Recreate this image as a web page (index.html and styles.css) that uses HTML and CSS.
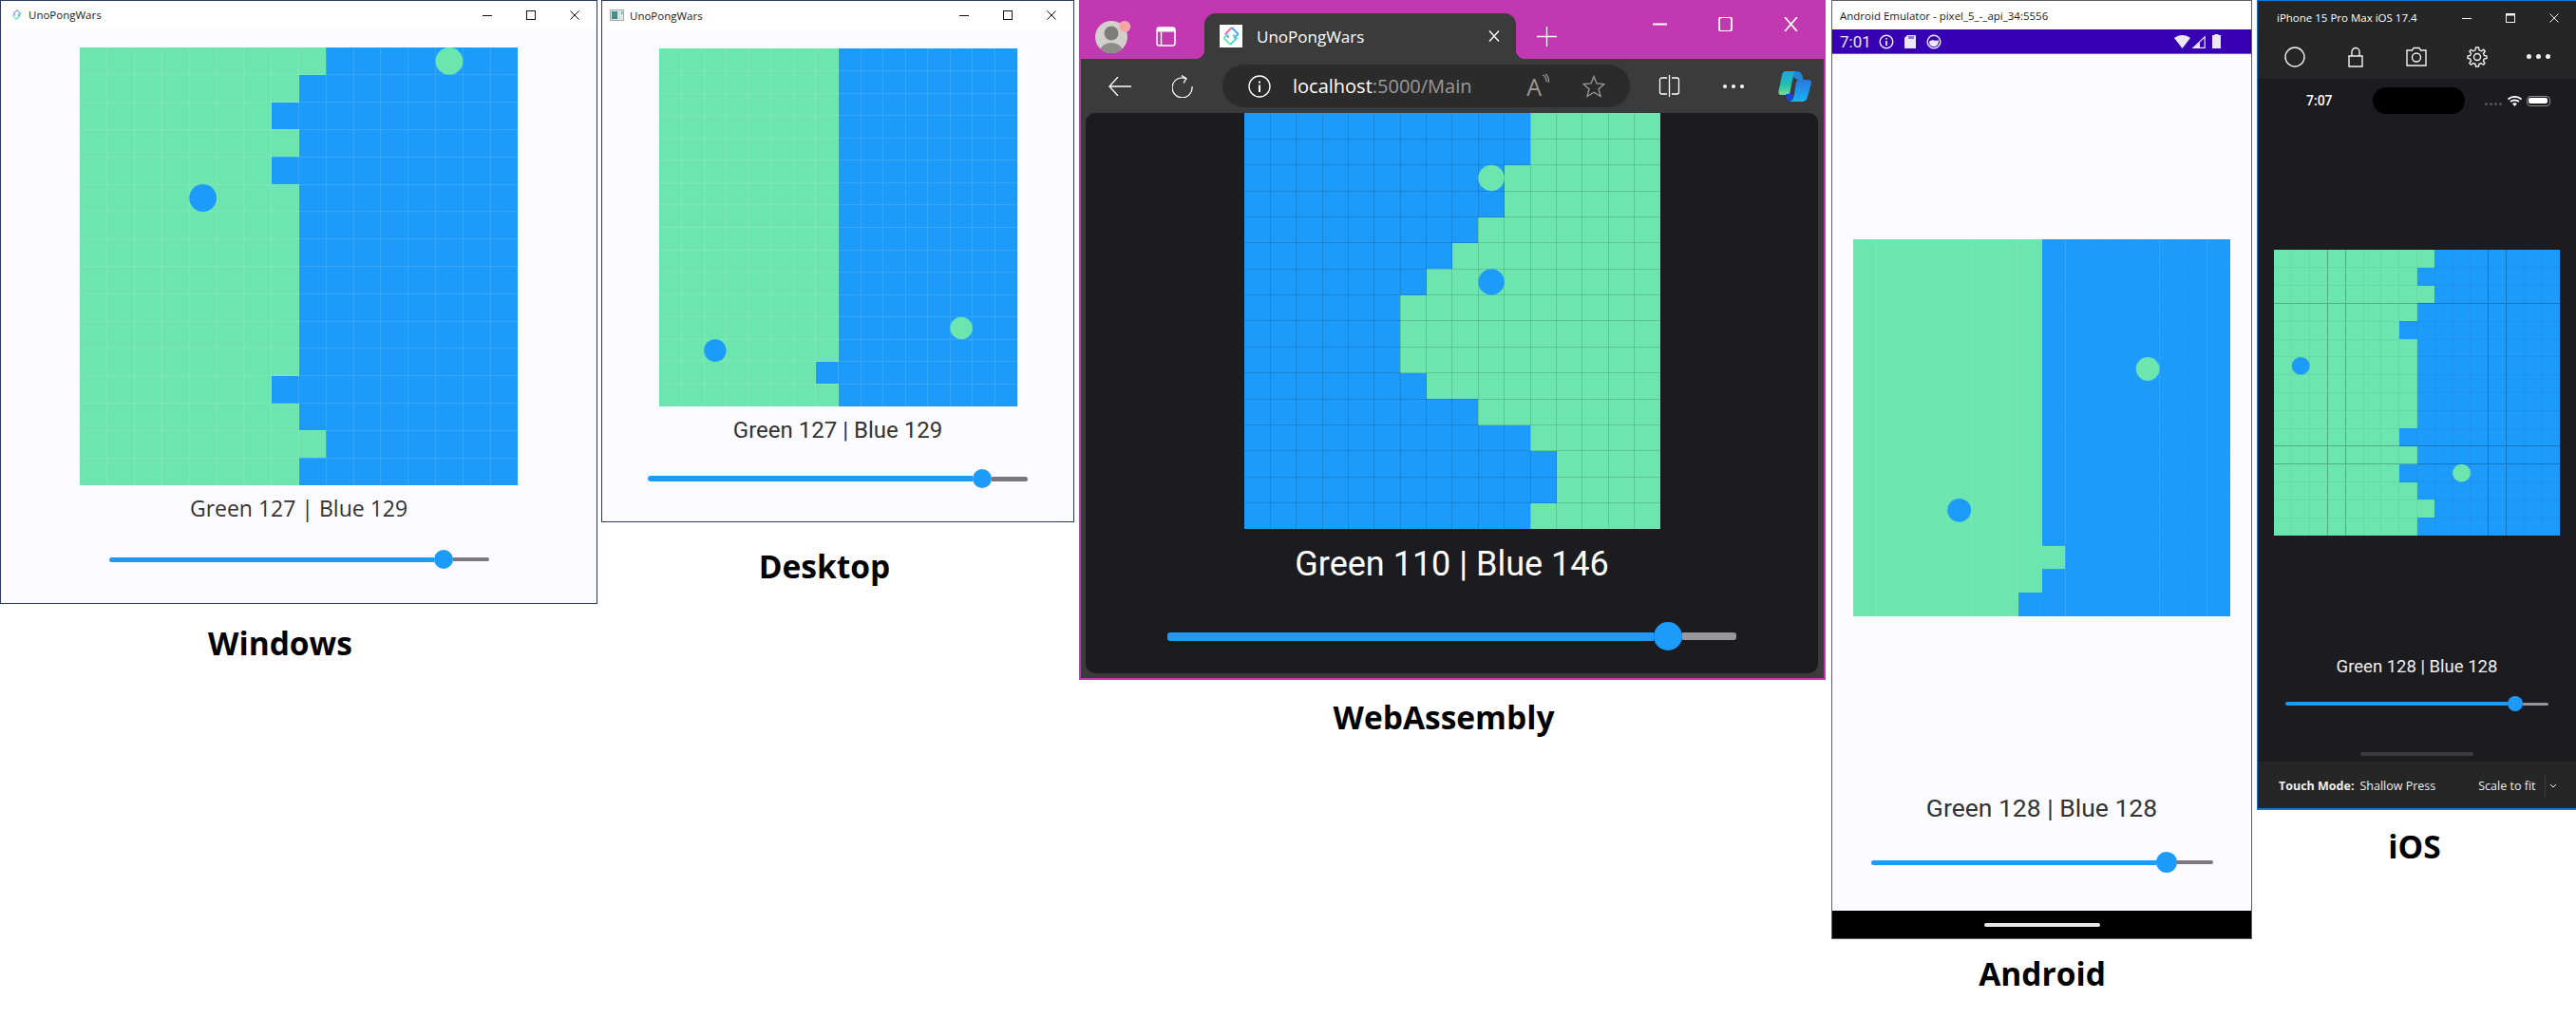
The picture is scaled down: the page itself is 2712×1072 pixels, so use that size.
FILE: index.html
```html
<!DOCTYPE html>
<html lang="en">
<head>
<meta charset="utf-8">
<title>UnoPongWars on five platforms</title>
<link rel="stylesheet" href="styles.css">
</head>
<body>
<svg class="defs" aria-hidden="true">
  <defs>
    <path id="grid" class="gridline" d="M1 0V16M2 0V16M3 0V16M4 0V16M5 0V16M6 0V16M7 0V16M8 0V16M9 0V16M10 0V16M11 0V16M12 0V16M13 0V16M14 0V16M15 0V16M0 1H16M0 2H16M0 3H16M0 4H16M0 5H16M0 6H16M0 7H16M0 8H16M0 9H16M0 10H16M0 11H16M0 12H16M0 13H16M0 14H16M0 15H16"/>
    <g id="ic-min"><path d="M0 5.500H10"/></g>
    <g id="ic-max"><rect x=".5" y=".5" width="9" height="9"/></g>
    <g id="ic-close"><path d="M.5 .5L9.500 9.500M9.500 .5L.5 9.500"/></g>
    <g id="uno" fill="none" stroke-width="1.300" stroke-linejoin="round">
      <path stroke="#f2709c" d="M4 6.500L8.500 2"/>
      <path stroke="#4aa8f5" d="M8.500 2L13 6.500L10 9.500"/>
      <path stroke="#9a7bf0" d="M4 6.500L6.500 9"/>
      <path stroke="#6ee7b0" d="M7.500 14L3 9.500L6 6.500"/>
      <path stroke="#52d6d0" d="M7.500 14L12 9.500L9.500 7"/>
    </g>
    <linearGradient id="cp1" x1="0" y1="0" x2="0" y2="1"><stop offset="0" stop-color="#1ea4e6"/><stop offset=".55" stop-color="#22bcb0"/><stop offset="1" stop-color="#72e08a"/></linearGradient>
    <linearGradient id="cp2" x1="0" y1="0" x2="0" y2="1"><stop offset="0" stop-color="#2a78dc"/><stop offset=".6" stop-color="#1c9cee"/><stop offset="1" stop-color="#19b6f6"/></linearGradient>
  </defs>
</svg>

<section class="win win-windows">
  <header class="titlebar">
    <svg class="app-icon" viewBox="0 0 16 16"><use href="#uno"/></svg>
    <span class="title">UnoPongWars</span>
    <div class="controls">
      <span class="ctl"><svg viewBox="0 0 10 10"><use href="#ic-min"/></svg></span>
      <span class="ctl"><svg viewBox="0 0 10 10"><use href="#ic-max"/></svg></span>
      <span class="ctl"><svg viewBox="0 0 10 10"><use href="#ic-close"/></svg></span>
    </div>
  </header>
  <main class="app">
    <svg class="board" viewBox="0 0 16 16" preserveAspectRatio="none">
      <path class="g" d="M0 0H9V1H8V2H7V3H8V4H7V5H8V12H7V13H8V14H9V15H8V16H0Z"/>
      <use href="#grid" class="lines-light"/>
      <circle class="bb" cx="4.500" cy="5.500" r=".5"/>
      <circle class="gb" cx="13.500" cy=".5" r=".5"/>
    </svg>
    <p class="score">Green 127 | Blue 129</p>
    <div class="slider"><span class="fill"></span><span class="thumb"></span><span class="rest"></span></div>
  </main>
</section>
<h2 class="cap cap-windows">Windows</h2>

<section class="win win-desktop">
  <header class="titlebar">
    <svg class="app-icon" viewBox="0 0 15 12">
      <rect x=".5" y=".5" width="14" height="11" fill="#e4e4e4" stroke="#a8a8a8"/>
      <rect x="2" y="2" width="6" height="8" fill="#3f8f88"/>
      <rect x="8" y="2" width="3" height="8" fill="#cfe3df"/>
      <rect x="12" y="2" width="1.500" height="3" fill="#7ba7a2"/>
    </svg>
    <span class="title">UnoPongWars</span>
    <div class="controls">
      <span class="ctl"><svg viewBox="0 0 10 10"><use href="#ic-min"/></svg></span>
      <span class="ctl"><svg viewBox="0 0 10 10"><use href="#ic-max"/></svg></span>
      <span class="ctl"><svg viewBox="0 0 10 10"><use href="#ic-close"/></svg></span>
    </div>
  </header>
  <main class="app">
    <svg class="board" viewBox="0 0 16 16" preserveAspectRatio="none">
      <path class="g" d="M0 0H8V14H7V15H8V16H0Z"/>
      <use href="#grid" class="lines-light"/>
      <circle class="bb" cx="2.500" cy="13.500" r=".5"/>
      <circle class="gb" cx="13.500" cy="12.500" r=".5"/>
    </svg>
    <p class="score">Green 127 | Blue 129</p>
    <div class="slider"><span class="fill"></span><span class="thumb"></span><span class="rest"></span></div>
  </main>
</section>
<h2 class="cap cap-desktop">Desktop</h2>

<section class="win win-wasm">
  <header class="tabstrip">
    <svg class="avatar" viewBox="0 0 38 36">
      <clipPath id="av"><circle cx="17" cy="19" r="17"/></clipPath>
      <circle cx="17" cy="19" r="17" fill="#d2d0cc"/>
      <g clip-path="url(#av)">
        <circle cx="17" cy="15" r="7.500" fill="#7e7c78"/>
        <ellipse cx="17" cy="34" rx="12" ry="9" fill="#8e8c88"/>
      </g>
      <circle cx="31" cy="8" r="5.500" fill="#f5a59a" stroke="#e6b8c8" stroke-width="1.200"/>
    </svg>
    <svg class="strip-ic" viewBox="0 0 21 21">
      <rect x="1" y="1" width="19" height="19" rx="2.500" fill="none" stroke="#fff" stroke-width="1.500"/>
      <path d="M1 5.500V3.500A2.500 2.500 0 0 1 3.500 1h14A2.500 2.500 0 0 1 20 3.500V5.500z" fill="#fff"/>
      <path d="M5.500 5.500V20" stroke="#fff" stroke-width="1.500"/>
    </svg>
    <div class="tab">
      <span class="favicon"><svg viewBox="0 0 16 16"><use href="#uno"/></svg></span>
      <span class="tab-title">UnoPongWars</span>
      <svg class="tab-x" viewBox="0 0 12 12"><path d="M1 .5L11 11.500M11 .5L1 11.500"/></svg>
    </div>
    <svg class="plus" viewBox="0 0 21 21"><path d="M10.500 0V21M0 10.500H21"/></svg>
    <div class="edge-ctl">
      <span><svg viewBox="0 0 15 15"><path d="M0 7.500H15" stroke-width="2"/></svg></span>
      <span><svg viewBox="0 0 15 15"><rect x="1" y="0" width="13" height="15" rx="2.500" stroke-width="1.800"/></svg></span>
      <span><svg viewBox="0 0 15 15"><path d="M1 0L14 15M14 0L1 15" stroke-width="1.800"/></svg></span>
    </div>
  </header>
  <nav class="toolbar">
    <svg class="tb-back" viewBox="0 0 24 20"><path d="M24 10H1M10 0L1 10L10 20"/></svg>
    <svg class="tb-reload" viewBox="0 0 22 24"><path d="M14 3.400A10.500 10.500 0 1 0 21 12"/><path d="M10 .5L15 3.600L12 8.500"/></svg>
    <div class="address">
      <svg class="addr-info" viewBox="0 0 24 24"><circle cx="12" cy="12" r="11"/><path d="M12 10.500V18M12 6.500V8.500" stroke-width="2"/></svg>
      <span class="url"><span class="host">localhost</span>:5000/Main</span>
      <span class="aloud">A<svg viewBox="0 0 8 14"><path d="M1 1c3 1 4 4 4 7M4 0c3 2 4 5 3 9"/></svg></span>
      <svg class="addr-star" viewBox="0 0 24 24"><path d="M12 1.500L15 9L23 9.600L17 14.700L19 22.500L12 18.300L5 22.500L7 14.700L1 9.600L9 9Z"/></svg>
    </div>
    <svg class="tb-split" viewBox="0 0 23 23"><path d="M9 3H3.500A2 2 0 0 0 1.500 5V18A2 2 0 0 0 3.500 20H9M14 3H19.500A2 2 0 0 1 21.500 5V18A2 2 0 0 1 19.500 20H14M11.500 0V23"/></svg>
    <span class="tb-dots"><i></i><i></i><i></i></span>
    <svg class="tb-copilot" viewBox="0 0 35 32">
      <path fill="#1f86d8" d="M20 0C23 0 26 3 26.500 9H20L16 6L16 3C17 1 18 0 20 0Z"/>
      <path fill="url(#cp1)" d="M8 0H20C17.500 0 16.500 2 16 5L12.500 22C12 24 10.500 25 8 25H3C1 25 0 23.500 .5 21L4 4C4.500 1.500 6 0 8 0Z"/>
      <path fill="#1b46d2" d="M8 24H14L17 27L14 32H12C9.500 31 8 27 8 24Z"/>
      <path fill="url(#cp2)" d="M22 9H31C34 9 35.500 10.500 34.800 13L31 27C30 30 28 32 25 32H11C14 32 16 30 16.500 27L19 12C19.500 10 20.500 9 22 9Z"/>
    </svg>
  </nav>
  <main class="app">
    <svg class="board" viewBox="0 0 16 16" preserveAspectRatio="none">
      <path class="b" d="M0 0H11V2H10V4H9V5H8V6H7V7H6V10H7V11H9V12H11V13H12V15H11V16H0Z"/>
      <use href="#grid" class="lines-dark"/>
      <circle class="gb" cx="9.500" cy="2.500" r=".5"/>
      <circle class="bb" cx="9.500" cy="6.500" r=".5"/>
    </svg>
    <p class="score">Green 110 | Blue 146</p>
    <div class="slider"><span class="fill"></span><span class="thumb"></span><span class="rest"></span></div>
  </main>
</section>
<h2 class="cap cap-wasm">WebAssembly</h2>

<section class="win win-android">
  <header class="titlebar"><span class="title">Android Emulator - pixel_5_-_api_34:5556</span></header>
  <div class="statusbar">
    <span class="clock">7:01</span>
    <svg class="st-ic" viewBox="0 0 16 16"><circle cx="8" cy="8" r="6.800" fill="none" stroke="#ede7f6" stroke-width="1.500"/><path d="M8 7V12M8 4V5.500" stroke="#ede7f6" stroke-width="1.800"/></svg>
    <svg class="st-ic" viewBox="0 0 16 16"><path d="M5 1H13A1 1 0 0 1 14 2V15H2V4Z" fill="#ede7f6"/><path d="M7 2V5M9 2V5M11 2V5" stroke="#3700b3"/></svg>
    <svg class="st-ic" viewBox="0 0 16 16"><circle cx="8" cy="8" r="6.800" fill="#3700b3" stroke="#ede7f6" stroke-width="1.500"/><path d="M3 8C5 6 6 6 8 6.500S11 7 13 6C13 11 11 13 8 13S3 11 3 8Z" fill="#ede7f6"/></svg>
    <span class="st-right">
      <svg class="st-wifi" viewBox="0 0 17 14"><path d="M0 3C5-1 12-1 17 3L8.500 14Z" fill="#ede7f6"/></svg>
      <svg class="st-cell" viewBox="0 0 15 14"><path d="M14.200 1.800V13.300H2Z" fill="none" stroke="#ede7f6" stroke-width="1.200"/><path d="M9 7V14H2Z" fill="#ede7f6"/></svg>
      <svg class="st-batt" viewBox="0 0 9 15"><path d="M2.500 0H6.500V1H9V15H0V1H2.500Z" fill="#ede7f6"/></svg>
    </span>
  </div>
  <main class="app">
    <svg class="board" viewBox="0 0 16 16" preserveAspectRatio="none">
      <path class="g" d="M0 0H8V13H9V14H8V15H7V16H0Z"/>
      <use href="#grid" class="lines-faint"/>
      <path class="lines-soft" d="M1 0V16M5 0V16M7 0V16M9 0V16M13 0V16M15 0V16"/>
      <circle class="gb" cx="12.500" cy="5.500" r=".5"/>
      <circle class="bb" cx="4.500" cy="11.500" r=".5"/>
    </svg>
    <p class="score">Green 128 | Blue 128</p>
    <div class="slider"><span class="fill"></span><span class="thumb"></span><span class="rest"></span></div>
  </main>
  <footer class="navbar"><span class="pill"></span></footer>
</section>
<h2 class="cap cap-android">Android</h2>

<section class="win win-ios">
  <header class="sim-title">
    <span class="title">iPhone 15 Pro Max iOS 17.4</span>
    <div class="controls">
      <span class="ctl"><svg viewBox="0 0 10 10"><use href="#ic-min"/></svg></span>
      <span class="ctl"><svg viewBox="0 0 10 10"><rect x=".5" y=".5" width="9" height="9"/><path d="M0 1.500H10" stroke-width="2"/></svg></span>
      <span class="ctl"><svg viewBox="0 0 10 10"><use href="#ic-close"/></svg></span>
    </div>
  </header>
  <nav class="sim-tools">
    <span><svg viewBox="0 0 22 22"><circle cx="11" cy="11" r="10"/></svg></span>
    <span><svg viewBox="0 0 22 22"><path d="M4 10H18V21H4ZM7 10V5.500A4 4 0 0 1 15 5.500V10"/></svg></span>
    <span><svg viewBox="0 0 22 22"><path d="M1 4H6.500L8 1.500H14L15.500 4H21V20H1Z"/><circle cx="11" cy="11.500" r="4.500"/></svg></span>
    <span><svg viewBox="0 0 22 22"><circle cx="11" cy="11" r="3.500"/><path d="M9.500 1H12.500L13 3.800L15.300 4.800L17.700 3.200L19.300 5L17.500 7.200L18.300 9.500L21 10V12.500L18.300 13L17.500 15.200L19 17.600L17.400 19.200L15 17.500L13 18.300L12.500 21H9.500L9 18.300L6.800 17.500L4.500 19.200L2.800 17.500L4.500 15.200L3.700 13L1 12.500V10L3.700 9.500L4.500 7.200L2.900 5L4.500 3.300L6.800 4.800L9 3.800Z"/></svg></span>
    <span class="sim-dots"><i></i><i></i><i></i></span>
  </nav>
  <div class="ios-status">
    <span class="ios-clock">7:07</span>
    <span class="notch"></span>
    <span class="ios-right">
      <span class="signal"><i></i><i></i><i></i><i></i></span>
      <svg class="ios-wifi" viewBox="0 0 15 11"><path d="M.5 3.500C4.500 0 10.500 0 14.500 3.500M3 6C5.500 4 9.500 4 12 6" fill="none" stroke="#fff" stroke-width="1.800"/><path d="M5 8C6.500 7 8.500 7 10 8L7.500 11Z" fill="#fff"/></svg>
      <span class="battery"><i></i></span>
    </span>
  </div>
  <main class="app">
    <svg class="board" viewBox="0 0 16 16" preserveAspectRatio="none">
      <path class="g" d="M0 0H9V1H8V2H9V3H8V4H7V5H8V10H7V11H8V12H7V13H8V14H9V15H8V16H0Z"/>
      <use href="#grid" class="lines-dark-faint"/>
      <path class="lines-strong" d="M3 0V16M4 0V16M12 0V16M13 0V16M0 3H16M0 11H16M0 12H16"/>
      <circle class="bb" cx="1.500" cy="6.500" r=".5"/>
      <circle class="gb" cx="10.500" cy="12.500" r=".5"/>
    </svg>
    <p class="score">Green 128 | Blue 128</p>
    <div class="slider"><span class="fill"></span><span class="thumb"></span><span class="rest"></span></div>
    <span class="ios-home"></span>
  </main>
  <footer class="sim-foot">
    <b>Touch Mode:</b>
    <span class="press">Shallow Press</span>
    <span class="scale">Scale to fit</span>
    <span class="divider"></span>
    <svg class="chev" viewBox="0 0 8 5"><path d="M1 1L4 4L7 1"/></svg>
  </footer>
</section>
<h2 class="cap cap-ios">iOS</h2>
</body>
</html>
```
FILE: styles.css
```css
* { box-sizing: border-box; }
html, body { margin: 0; padding: 0; }
body {
  position: relative;
  width: 2712px;
  height: 1072px;
  overflow: hidden;
  background: #fff;
  font-family: "Open Sans", "Noto Sans", sans-serif;
}
.defs { position: absolute; width: 0; height: 0; }

/* free canvas: each window sits where it was placed on the desktop */
.win {
  position: absolute;
  top: 0;
  display: flex;
  flex-direction: column;
  background: #fcfbff;
  overflow: hidden;
}
.win-windows { left: 0; width: 629px; height: 636px; border: 1px solid #2c3a60; }
.win-desktop { left: 633px; width: 498px; height: 550px; border: 1px solid #2c3a60; }
.win-wasm { left: 1136px; width: 786px; height: 716px; border: 2px solid #c238b0; background: #3b3b3b; }
.win-android { left: 1928px; width: 443px; height: 989px; border: 1px solid #5d6068; }
.win-ios { left: 2376px; width: 336px; height: 853px; border: 1px solid #0f78d4; border-right: 0; background: #262626; }

/* shared app layout */
.app {
  display: flex;
  flex-direction: column;
  align-items: center;
  flex: 1;
  min-height: 0;
  font-family: Roboto, sans-serif;
}
.board {
  display: block;
  flex: none;
  width: var(--board);
  height: var(--board);
  background: #1c9bfb;
}
.g { fill: #6ce5ae; shape-rendering: crispEdges; }
.b { fill: #1c9bfb; shape-rendering: crispEdges; }
.bb { fill: #1c9bfb; }
.gb { fill: #6ce5ae; }
.gridline { fill: none; stroke-width: 1px; vector-effect: non-scaling-stroke; shape-rendering: crispEdges; }
.lines-light { stroke: rgba(255, 255, 255, .12); }
.lines-faint { stroke: rgba(255, 255, 255, .025); }
.lines-soft { fill: none; stroke: rgba(255, 255, 255, .09); vector-effect: non-scaling-stroke; shape-rendering: crispEdges; }
.lines-dark { stroke: rgba(0, 0, 0, .13); }
.lines-dark-faint { stroke: rgba(0, 0, 0, .045); }
.lines-strong { fill: none; stroke: rgba(0, 0, 0, .2); vector-effect: non-scaling-stroke; shape-rendering: crispEdges; }

.score {
  margin: var(--gap-a) 0 var(--gap-b);
  font-size: var(--score);
  line-height: var(--lh);
  color: #333;
  white-space: nowrap;
}
.slider { display: flex; align-items: center; flex: none; width: var(--w); height: var(--thumb); }
.fill { flex: none; width: var(--fill); height: var(--track); background: #1c9bfb; border-radius: 3px 0 0 3px; }
.thumb { flex: none; width: var(--thumb); height: var(--thumb); border-radius: 50%; background: #1c9bfb; }
.rest { flex: 1; height: calc(var(--track) - 1px); background: #7b7680; border-radius: 0 3px 3px 0; }

/* title bars */
.titlebar { display: flex; align-items: center; flex: none; background: #fff; color: #1a1a1a; }
.title { font-size: 11.500px; white-space: nowrap; }
.app-icon { flex: none; }
.controls { display: flex; margin-left: auto; }
.ctl { display: flex; align-items: center; justify-content: center; width: 46px; height: 30px; }
.ctl svg { width: 10px; height: 10px; fill: none; stroke: #111; stroke-width: 1; overflow: visible; }

/* Windows */
.win-windows .titlebar { height: 29px; padding-left: 10px; }
.win-windows .app-icon { width: 13px; height: 13px; margin-right: 6px; }
.win-windows .app {
  padding-top: 20px;
  --board: 461px; --score: 23px; --lh: 32px; --gap-a: 8px; --gap-b: 28px;
  --w: 400px; --fill: 342px; --thumb: 20px; --track: 5px;
}
.win-windows .score { font-family: "Open Sans", sans-serif; }

/* Desktop */
.win-desktop .titlebar { height: 30px; padding-left: 8px; }
.win-desktop .app-icon { width: 15px; height: 12px; margin-right: 6px; }
.win-desktop .app {
  padding-top: 20px;
  --board: 377px; --score: 24px; --lh: 30px; --gap-a: 10px; --gap-b: 26px;
  --w: 400px; --fill: 342px; --thumb: 20px; --track: 6px;
}

/* WebAssembly / Edge chrome */
.tabstrip {
  display: flex;
  align-items: center;
  flex: none;
  height: 60px;
  padding-top: 12px;
  background: #c238b0;
}
.avatar { flex: none; width: 38px; height: 36px; margin-left: 15px; }
.strip-ic { flex: none; width: 21px; height: 21px; margin-left: 26px; }
.tab {
  position: relative;
  display: flex;
  align-items: center;
  flex: none;
  width: 328px;
  height: 48px;
  margin-left: 30px;
  padding: 0 17px 0 16px;
  background: #3b3b3b;
  border-radius: 12px 12px 0 0;
}
.tab::before, .tab::after {
  content: "";
  position: absolute;
  bottom: 0;
  width: 10px;
  height: 10px;
}
.tab::before { left: -10px; background: radial-gradient(circle at 0 0, transparent 10px, #3b3b3b 10.500px); }
.tab::after { right: -10px; background: radial-gradient(circle at 100% 0, transparent 10px, #3b3b3b 10.500px); }
.favicon { display: flex; align-items: center; justify-content: center; flex: none; width: 24px; height: 24px; background: #fff; }
.favicon svg { width: 24px; height: 24px; }
.tab-title { margin-left: 15px; font-size: 17px; color: #fff; white-space: nowrap; }
.tab-x { flex: none; width: 12px; height: 12px; margin-left: auto; fill: none; stroke: #fff; stroke-width: 1.400; }
.plus { flex: none; width: 21px; height: 21px; margin-left: 22px; fill: none; stroke: #fff; stroke-width: 1.300; }
.edge-ctl { display: flex; align-self: flex-start; margin: -4px 0 0 auto; }
.edge-ctl span { display: flex; align-items: center; justify-content: center; width: 69px; height: 30px; }
.edge-ctl svg { width: 15px; height: 15px; fill: none; stroke: #fff; }
.toolbar { display: flex; align-items: center; flex: none; height: 57px; padding-left: 29px; background: #3b3b3b; }
.toolbar svg { flex: none; fill: none; stroke: #fff; stroke-width: 1.300; }
.tb-back { width: 24px; height: 20px; }
.tb-reload { width: 22px; height: 24px; margin-left: 43px; }
.address {
  display: flex;
  align-items: center;
  flex: none;
  width: 429px;
  height: 45px;
  margin-left: 31px;
  padding: 0 26px 0 27px;
  background: #2b2b2b;
  border-radius: 23px;
}
.addr-info { width: 24px; height: 24px; }
.url { margin-left: 23px; font-size: 20px; color: #9a9a9a; white-space: nowrap; }
.host { color: #fff; }
.aloud { display: flex; margin-left: auto; font-size: 25px; line-height: 26px; color: #9a9a9a; }
.toolbar .aloud svg { width: 8px; height: 14px; stroke: #9a9a9a; }
.toolbar .addr-star { width: 24px; height: 24px; margin-left: 35px; stroke: #9a9a9a; }
.tb-split { width: 23px; height: 23px; margin-left: 30px; }
.tb-dots { display: flex; gap: 5px; flex: none; margin-left: 45px; }
.tb-dots i { width: 4px; height: 4px; border-radius: 50%; background: #fff; }
.toolbar .tb-copilot { width: 35px; height: 32px; margin-left: 36px; stroke: none; }
.win-wasm .app {
  margin: 0 6px 5px 5px;
  background: #1c1c20;
  border-radius: 10px;
  --board: 438px; --score: 36px; --lh: 44px; --gap-a: 15px; --gap-b: 39px;
  --w: 599px; --fill: 512px; --thumb: 30px; --track: 9px;
}
.win-wasm .board { background: #6ce5ae; }
.win-wasm .score { color: #fff; }
.win-wasm .rest { background: #98969c; }

/* Android */
.win-android .titlebar { height: 30px; padding-left: 8px; }
.statusbar {
  display: flex;
  align-items: center;
  flex: none;
  height: 26px;
  padding: 0 32px 0 8px;
  background: #3700b3;
  border-bottom: 1px solid #7a55d0;
}
.clock { width: 41px; font-family: Roboto, sans-serif; font-size: 17px; color: #ede7f6; }
.st-ic { flex: none; width: 16px; height: 16px; margin-right: 9px; }
.st-right { display: flex; align-items: center; gap: 1px; margin-left: auto; }
.st-wifi { width: 17px; height: 14px; }
.st-cell { width: 15px; height: 14px; margin-right: 6px; }
.st-batt { width: 9px; height: 15px; }
.win-android .app {
  padding-top: 195px;
  --board: 397px; --score: 26.500px; --lh: 36px; --gap-a: 184px; --gap-b: 28px;
  --w: 360px; --fill: 300px; --thumb: 22px; --track: 5px;
}
.navbar { display: flex; align-items: center; justify-content: center; flex: none; height: 29px; background: #000; }
.pill { width: 122px; height: 4px; border-radius: 2px; background: #e8e8e8; }

/* iOS simulator */
.sim-title { display: flex; align-items: center; flex: none; height: 35px; padding-left: 20px; color: #fff; }
.sim-title .ctl { height: 35px; }
.sim-title .ctl svg { stroke: #f2f2f2; }
.sim-tools { display: flex; flex: none; height: 47px; padding-left: 7px; }
.sim-tools span { display: flex; align-items: center; justify-content: center; width: 64px; height: 47px; }
.sim-tools svg { width: 22px; height: 22px; fill: none; stroke: #f2f2f2; stroke-width: 1.400; }
.sim-dots { gap: 5px; }
.sim-dots i { width: 5px; height: 5px; border-radius: 50%; background: #f2f2f2; }
.ios-status { position: relative; display: flex; align-items: center; flex: none; height: 46px; background: #1c1c20; }
.ios-clock { margin-left: 51px; font-family: Roboto, sans-serif; font-size: 14px; font-weight: 500; color: #fff; }
.notch { width: 97px; height: 28px; margin-left: 42px; border-radius: 14px; background: #000; }
.ios-right { display: flex; align-items: center; margin-left: 21px; }
.signal { display: flex; gap: 2px; margin-top: 6px; margin-right: 6px; }
.signal i { width: 3px; height: 3px; background: #55555a; border-radius: 50%; }
.ios-wifi { width: 15px; height: 11px; margin-right: 5px; }
.battery { display: block; width: 25px; height: 11px; padding: 1.500px; border: 1px solid #8c8c90; border-radius: 4px; }
.battery i { display: block; height: 100%; background: #fff; border-radius: 2px; }
.win-ios .app {
  background: #1c1c20;
  padding-top: 134px;
  --board: 301px; --score: 18.500px; --lh: 26px; --gap-a: 125px; --gap-b: 18px;
  --w: 277px; --fill: 234px; --thumb: 16px; --track: 4px;
}
.win-ios .score { color: #f0f0f0; }
.win-ios .rest { background: #98969c; }
.ios-home { width: 119px; height: 4px; margin-top: 43px; border-radius: 2px; background: #3c3c40; }
.sim-foot {
  display: flex;
  align-items: center;
  flex: none;
  height: 50px;
  padding: 2px 0 0 22px;
  font-size: 12.500px;
  color: #f0f0f0;
  border-bottom: 1px solid #0f78d4;
}
.press { margin-left: 6px; }
.scale { margin-left: 45px; }
.divider { width: 1px; height: 22px; margin-left: 9px; background: #3d3d3d; }
.chev { width: 8px; height: 5px; margin-left: 4px; fill: none; stroke: #eee; stroke-width: 1; }

/* captions under the windows */
.cap {
  position: absolute;
  margin: 0;
  font-family: "Open Sans", sans-serif;
  font-size: 33.500px;
  font-weight: 700;
  line-height: 44px;
  color: #000;
  transform: translateX(-50%);
  white-space: nowrap;
}
.cap-windows { left: 295px; top: 655px; }
.cap-desktop { left: 868px; top: 574px; }
.cap-wasm { left: 1520px; top: 733px; }
.cap-android { left: 2150px; top: 1003px; }
.cap-ios { left: 2542px; top: 869px; }
```
